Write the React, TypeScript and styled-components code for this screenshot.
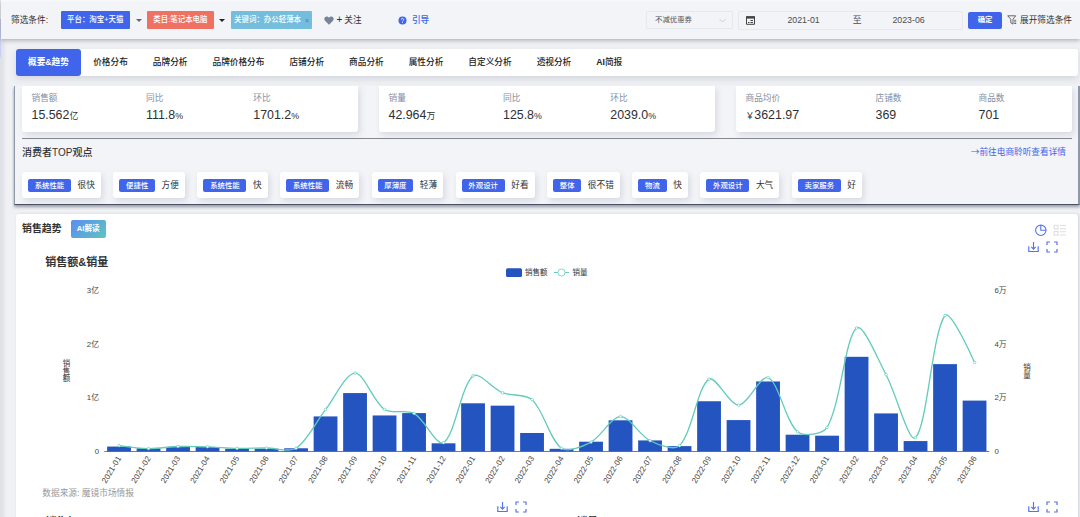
import React from 'react';
import styled, { createGlobalStyle, css } from 'styled-components';

const GlobalStyle = createGlobalStyle`
  * { box-sizing: border-box; }
  html, body { margin: 0; padding: 0; }
  body {
    width: 1080px;
    height: 517px;
    overflow: hidden;
    background: #f0f1f4;
    font-family: "Liberation Sans", "Noto Sans CJK SC", sans-serif;
    color: #303133;
    font-size: 8.67px;
    line-height: 1;
  }
`;

const Page = styled.div`
  height: 517px;
  display: flex;
  overflow: hidden;
`;

const SideEdge = styled.div`
  width: 1px;
  flex: none;
  background: linear-gradient(#eceef2 0 19px, #c9cff5 19px 57px, #dfe1e7 57px);
`;

const Main = styled.div`
  flex: 1;
  min-width: 0;
  height: 517px;
  background: linear-gradient(90deg, #dcdfe5 0, #f0f1f4 6px);
`;

const Header = styled.header`
  height: 39px;
  display: flex;
  align-items: center;
  padding: 1px 0 0 10px;
  background: linear-gradient(#f8f9fa 0, #f3f4f7 3px);
  box-shadow: 0 1px 5px rgba(0, 0, 0, 0.32);
  white-space: nowrap;
`;

const FilterLabel = styled.span`
  width: 49.5px;
`;

const FilterTag = styled.span<{ $bg: string; $w: number }>`
  width: ${p => p.$w}px;
  height: 18px;
  display: flex;
  align-items: center;
  justify-content: center;
  gap: 4px;
  background: ${p => p.$bg};
  border-radius: 1px;
  color: #fff;
  font-size: 7.45px;
  font-weight: 500;
`;

const TagClose = styled.i`
  font-style: normal;
  font-size: 7px;
  color: #3f78d8;
`;

const Caret = styled.i<{ $color: string }>`
  margin: 0 5.6px;
  border: 3px solid transparent;
  border-top: 3.5px solid ${p => p.$color};
  border-bottom: 0;
`;

const Follow = styled.span`
  margin-left: 12px;
  width: 73.5px;
  display: flex;
  align-items: center;
  gap: 2px;
`;

const Plus = styled.span`
  font-size: 10px;
`;

const Guide = styled.span`
  flex: 1;
  display: flex;
  align-items: center;
  gap: 5px;
  color: #4065eb;
  font-weight: 500;
`;

const Select = styled.div`
  width: 87px;
  height: 18px;
  display: flex;
  align-items: center;
  justify-content: space-between;
  padding: 0 6px 0 8px;
  border: 1px solid #e6e8ec;
  border-radius: 2px;
  font-size: 7.4px;
  color: #505256;
`;

const DateRange = styled.div`
  width: 225px;
  height: 19px;
  margin: 0 5px;
  display: flex;
  align-items: center;
  padding-left: 7px;
  border: 1px solid #e6e8ec;
  border-radius: 2px;
  color: #4b4d50;
  font-size: 8.8px;
`;

const DateText = styled.span<{ $w: number }>`
  width: ${p => p.$w}px;
  text-align: center;
`;

const Confirm = styled.button`
  width: 34px;
  height: 17px;
  padding: 0 0 1px;
  border: 0;
  border-radius: 2px;
  background: #4065eb;
  color: #fff;
  font: 700 7.4px/16px "Liberation Sans", "Noto Sans CJK SC", sans-serif;
`;

const Expand = styled.span`
  margin: 0 8px 0 5px;
  display: flex;
  align-items: center;
  gap: 3px;
`;

const Content = styled.main`
  padding: 10px 0 0 13px;
`;

const Tabs = styled.nav`
  margin: 0 2px 0 2px;
  height: 27px;
  display: flex;
  background: #fff;
  border-radius: 3px;
  box-shadow: 0 3px 7px rgba(70, 80, 120, 0.16);
`;

const Tab = styled.a<{ $active?: boolean }>`
  height: 27px;
  padding: 0 12.5px;
  display: flex;
  align-items: center;
  font-weight: 500;
  color: #222;
  white-space: nowrap;
  ${p =>
    p.$active &&
    css`
      background: #4065eb;
      color: #fff;
      font-weight: 700;
      border-radius: 3px;
      width: 64.7px;
      padding: 0 12px;
    `}
`;

const Latin = styled.span`
  font-weight: 700;
`;

const Summary = styled.section`
  margin-top: 10px;
  height: 119px;
  padding: 0 6px 0 7px;
  border: solid #8f98a8;
  border-width: 0 2px 1px 1.5px;
  border-bottom-color: #4a5162;
  background: #f3f4f7;
  box-shadow: 0 2px 3px rgba(60, 70, 90, 0.5);
  clip-path: inset(0 -2px -6px -2px);
`;

const Cards = styled.div`
  display: flex;
  gap: 21px;
`;

const Card = styled.div`
  width: 336px;
  height: 46px;
  padding: 7px 0 0 9.5px;
  display: flex;
  background: #fff;
  border-radius: 0 0 3px 3px;
  box-shadow: 2px 3px 6px rgba(80, 90, 130, 0.17);
`;

const Metric = styled.div<{ $w: number }>`
  width: ${p => p.$w}px;
`;

const MetricLabel = styled.div`
  height: 10px;
  line-height: 10px;
  color: #8590a3;
`;

const MetricValue = styled.div`
  margin-top: 3px;
  line-height: 18px;
  font-size: 12.4px;
  color: #2d2f33;
  small { font-size: 8.8px; }
`;

const Opinion = styled.div`
  margin-top: 6px;
  width: 1050px;
  border-top: 1px solid #85888e;
`;

const OpinionHead = styled.div`
  height: 33px;
  padding: 8px 6px 0 0;
  display: flex;
  justify-content: space-between;
`;

const OpinionLink = styled.a`
  color: #4065eb;
  font-family: "Noto Sans CJK SC", sans-serif;
  line-height: 8px;
`;

const OpinionTitle = styled.span`
  font-size: 10px;
  line-height: 12px;
  font-weight: 500;
`;

const Chips = styled.div`
  display: flex;
  gap: 12.55px;
`;

const Chip = styled.div`
  height: 26px;
  padding: 0 6px;
  display: flex;
  align-items: center;
  gap: 6.6px;
  background: #fff;
  border-radius: 3px;
  box-shadow: 2px 3px 6px rgba(80, 90, 130, 0.17);
  white-space: nowrap;
`;

const ChipTag = styled.span`
  height: 13px;
  margin-top: 1px;
  padding: 0 6.7px;
  display: flex;
  align-items: center;
  border-radius: 2px;
  background: #4065eb;
  color: #fff;
  font-size: 7.4px;
  font-weight: 500;
`;

const Panel = styled.section`
  margin: 9px 2px 0 2px;
  height: 320px;
  background: #fff;
  border-radius: 3px;
  box-shadow: 1px 0 3px rgba(80, 90, 130, 0.2);
`;

const PanelHead = styled.div`
  height: 27px;
  padding: 6px 12.5px 0 6px;
  display: flex;
  align-items: flex-start;
`;

const PanelTitle = styled.h2`
  margin: 0;
  width: 48.7px;
  font-size: 9.9px;
  line-height: 17px;
  font-weight: 700;
  white-space: nowrap;
`;

const AiButton = styled.span`
  width: 35px;
  height: 17.5px;
  line-height: 17.5px;
  text-align: center;
  border-radius: 2px;
  background: linear-gradient(135deg, #5b8cf2, #5cc5bf);
  color: #fff;
  font-size: 7.6px;
  font-weight: 700;
`;

const ViewSwitch = styled.div`
  margin: 4px 0 0 auto;
  display: flex;
  gap: 6px;
`;

const Tools = styled.div`
  height: 13px;
  padding-right: 20.5px;
  display: flex;
  justify-content: flex-end;
  gap: 7px;
`;

const ChartSvg = styled.svg`
  display: block;
  width: 1062px;
  height: 247px;
  font-family: "Liberation Sans", "Noto Sans CJK SC", sans-serif;
`;

const NextCharts = styled.div`
  display: flex;
`;

const NextChart = styled.div`
  width: 531px;
`;

const NextTitle = styled.div`
  padding: 1px 0 0 29.5px;
  font-size: 10.8px;
  font-weight: 700;
  line-height: 14px;
`;

const tabs = ['价格分布', '品牌分析', '品牌价格分布', '店铺分析', '商品分析', '属性分析', '自定义分析', '透视分析'];

const cards = [
  [
    { label: '销售额', value: '15.562', unit: '亿', w: 114.5 },
    { label: '同比', value: '111.8', unit: '%', w: 107.3 },
    { label: '环比', value: '1701.2', unit: '%', w: 90 },
  ],
  [
    { label: '销量', value: '42.964', unit: '万', w: 114.5 },
    { label: '同比', value: '125.8', unit: '%', w: 107.3 },
    { label: '环比', value: '2039.0', unit: '%', w: 90 },
  ],
  [
    { label: '商品均价', prefix: '￥', value: '3621.97', w: 130 },
    { label: '店铺数', value: '369', w: 103 },
    { label: '商品数', value: '701', w: 80 },
  ],
] as { label: string; prefix?: string; value: string; unit?: string; w: number }[][];

const chips = [
  ['系统性能', '很快'], ['便捷性', '方便'], ['系统性能', '快'], ['系统性能', '流畅'], ['厚薄度', '轻薄'],
  ['外观设计', '好看'], ['整体', '很不错'], ['物流', '快'], ['外观设计', '大气'], ['卖家服务', '好'],
];

const months = Array.from({ length: 30 }, (_, i) => `${2021 + Math.floor(i / 12)}-${String((i % 12) + 1).padStart(2, '0')}`);

/* Sales in 亿 and volume in 万, one entry per month. */
const sales = [
  0.092, 0.06, 0.082, 0.082, 0.052, 0.052, 0.06, 0.652, 1.086, 0.67, 0.714, 0.152, 0.896, 0.852, 0.344,
  0.05, 0.182, 0.58, 0.206, 0.1, 0.934, 0.584, 1.302, 0.312, 0.294, 1.76, 0.708, 0.194, 1.624, 0.946,
];
const volume = [
  0.22, 0.11, 0.185, 0.175, 0.115, 0.13, 0.12, 1.56, 2.916, 1.56, 1.416, 0.33, 2.81, 2.184, 1.928,
  0.12, 0.35, 1.3, 0.4, 0.22, 2.69, 1.725, 2.75, 0.735, 0.895, 4.588, 2.855, 0.516, 5.056, 3.31,
];

const X0 = 88.3;
const STEP = 29.5;
const BASE = 197.5;
const UNIT = 53.8;
const SMOOTH = 0.31;
const centre = (i: number) => X0 + STEP * (i + 0.5);
const points = volume.map((v, i) => [centre(i), BASE - (v / 2) * UNIT] as const);

function smoothPath(pts: readonly (readonly [number, number])[]) {
  let d = `M${pts[0][0]} ${pts[0][1]}`;
  let out = pts[0] as readonly [number, number];
  for (let i = 1; i < pts.length; i++) {
    const [x, y] = pts[i];
    const prev = pts[i - 1];
    const next = pts[i + 1];
    let cin: [number, number] = [x, y];
    let nextOut: readonly [number, number] = [x, y];
    if (next) {
      const vx = next[0] - prev[0];
      const vy = next[1] - prev[1];
      const lp = Math.hypot(x - prev[0], y - prev[1]);
      const ln = Math.hypot(next[0] - x, next[1] - y);
      const r = ln / (lp + ln);
      cin = [x - vx * SMOOTH * (1 - r), y - vy * SMOOTH * (1 - r)];
      nextOut = [x + vx * SMOOTH * r, y + vy * SMOOTH * r];
    }
    d += `C${out[0]} ${out[1]} ${cin[0]} ${cin[1]} ${x} ${y}`;
    out = nextOut;
  }
  return d;
}

const DownloadIcon = () => (
  <svg width="11" height="12" viewBox="0 0 11 12" fill="none" stroke="#5474ee" strokeWidth="1.15">
    <path d="M.8 5.2v5.3h9.4V5.2M5.5 1v7M3.3 5.9l2.2 2.2 2.2-2.2" />
  </svg>
);

const FullscreenIcon = () => (
  <svg width="12" height="12" viewBox="0 0 12 12" fill="none" stroke="#5474ee" strokeWidth="1.2">
    <path d="M1 4V1h3M8 1h3v3M11 8v3H8M4 11H1V8" />
  </svg>
);

function TrendChart() {
  return (
    <ChartSvg viewBox="0 0 1062 247">
      <text x="29.3" y="11.5" fontSize="11" fontWeight="700" fill="#303133">销售额&amp;销量</text>
      <rect x="490" y="14.2" width="16" height="8.8" rx="1.5" fill="#2454c0" />
      <text x="509" y="21.3" fontSize="7.5" fill="#333">销售额</text>
      <path d="M538 18.5h15" stroke="#66cdbf" />
      <circle cx="545.5" cy="18.5" r="3.6" fill="#fff" stroke="#66cdbf" strokeWidth="0.8" />
      <text x="556.5" y="21.3" fontSize="7.5" fill="#333">销量</text>
      {[3, 2, 1, 0].map(n => (
        <g key={n} fontSize="7.8" fill="#444">
          <text x="83" y={BASE - n * UNIT + 2.7} textAnchor="end">{n ? `${n}亿` : '0'}</text>
          <text x="978.5" y={BASE - n * UNIT + 2.7}>{n ? `${n * 2}万` : '0'}</text>
        </g>
      ))}
      <g fontSize="7.5" fill="#333" textAnchor="middle">
        {[...'销售额'].map((c, i) => <text key={c} x="50.5" y={112.3 + i * 7.5}>{c}</text>)}
        {[...'销量'].map((c, i) => <text key={c} x="1011" y={116 + i * 7.5}>{c}</text>)}
      </g>
      {sales.map((v, i) => (
        <rect key={i} x={centre(i) - 11.9} y={BASE - v * UNIT} width="23.8" height={v * UNIT} fill="#2454c0" />
      ))}
      <path d={`M${X0} ${BASE}H${X0 + STEP * 30}`} stroke="#555c6b" strokeWidth="0.8" />
      <path d={smoothPath(points)} fill="none" stroke="#62cbbb" strokeWidth="1.3" />
      {points.map(([x, y], i) => (
        <circle key={i} cx={x} cy={y} r="1.3" fill="#fff" stroke="#66cdbf" strokeWidth="0.7" />
      ))}
      {months.map((m, i) => (
        <text
          key={m}
          transform={`translate(${centre(i) + 2.4} 204.3) rotate(-59)`}
          textAnchor="end"
          fontSize="8"
          textLength="29.8"
          fill="#444"
        >
          {m}
        </text>
      ))}
      <text x="26.3" y="242.4" fontSize="8.7" fill="#999">数据来源: 魔镜市场情报</text>
    </ChartSvg>
  );
}

export default function App() {
  return (
    <Page>
      <GlobalStyle />
      <SideEdge />
      <Main>
        <Header>
          <FilterLabel>筛选条件:</FilterLabel>
          <FilterTag $bg="#4065eb" $w={69.5}>平台：淘宝+天猫</FilterTag>
          <Caret $color="#666" />
          <FilterTag $bg="#ee7161" $w={66.5}>类目:笔记本电脑</FilterTag>
          <Caret $color="#222" />
          <FilterTag $bg="#74bddc" $w={81.5}>关键词：办公轻薄本<TagClose>×</TagClose></FilterTag>
          <Follow>
            <svg width="10" height="9" viewBox="0 0 10 9" fill="#76849a">
              <path d="M5 8.7 1 4.7C-.6 2.7.8.4 2.7.4 3.8.4 4.6 1 5 1.7 5.4 1 6.2.4 7.3.4 9.2.4 10.6 2.7 9 4.7z" />
            </svg>
            <Plus>+</Plus>
            <span>关注</span>
          </Follow>
          <Guide>
            <svg width="9" height="9" viewBox="0 0 9 9">
              <circle cx="4.5" cy="4.5" r="4" fill="#4065eb" />
              <path d="M3.3 3.6a1.2 1.2 0 1 1 1.7 1.1q-.5.2-.5.8M4.5 6.2v.8" fill="none" stroke="#fff" strokeWidth=".8" />
            </svg>
            引导
          </Guide>
          <Select>
            不减优惠券
            <svg width="7" height="5" viewBox="0 0 7 5" fill="none" stroke="#c0c4cc" strokeWidth=".8"><path d="M.5 1l3 3 3-3" /></svg>
          </Select>
          <DateRange>
            <svg width="9" height="9" viewBox="0 0 9 9">
              <path d="M.5.8h8v7.5h-8z" fill="none" stroke="#444" />
              <path d="M0 .3h9v2.3H0z" fill="#444" />
              <path d="M2 6.5h1.5M4.5 6.5H7M4.5 4.5H7" stroke="#444" />
            </svg>
            <DateText $w={97}>2021-01</DateText>
            <DateText $w={10}>至</DateText>
            <DateText $w={93}>2023-06</DateText>
          </DateRange>
          <Confirm>确定</Confirm>
          <Expand>
            <svg width="10" height="10" viewBox="0 0 10 10" fill="none" stroke="#444" strokeWidth=".8">
              <path d="M.7.8h8L6 4.2v4.9L3.8 7.8V4.2zM7.2 5.3h2M7.2 6.9h2M7.2 8.5h2" />
            </svg>
            展开筛选条件
          </Expand>
        </Header>
        <Content>
          <Tabs>
            <Tab $active>概要&amp;趋势</Tab>
            {tabs.map(t => <Tab key={t}>{t}</Tab>)}
            <Tab><Latin>AI</Latin>简报</Tab>
          </Tabs>
          <Summary>
            <Cards>
              {cards.map((metrics, i) => (
                <Card key={i}>
                  {metrics.map(m => (
                    <Metric key={m.label} $w={m.w}>
                      <MetricLabel>{m.label}</MetricLabel>
                      <MetricValue>
                        {m.prefix && <small>{m.prefix}</small>}
                        {m.value}
                        {m.unit && <small>{m.unit}</small>}
                      </MetricValue>
                    </Metric>
                  ))}
                </Card>
              ))}
            </Cards>
            <Opinion>
              <OpinionHead>
                <OpinionTitle>消费者TOP观点</OpinionTitle>
                <OpinionLink>→前往电商聆听查看详情</OpinionLink>
              </OpinionHead>
              <Chips>
                {chips.map(([tag, text], i) => (
                  <Chip key={i}><ChipTag>{tag}</ChipTag>{text}</Chip>
                ))}
              </Chips>
            </Opinion>
          </Summary>
          <Panel>
            <PanelHead>
              <PanelTitle>销售趋势</PanelTitle>
              <AiButton>AI解读</AiButton>
              <ViewSwitch>
                <svg width="13" height="13" viewBox="0 0 13 13" fill="none" stroke="#5474ee" strokeWidth="1.1">
                  <circle cx="6.8" cy="6.3" r="5.2" /><path d="M6.8 1.1v5.2H12" />
                </svg>
                <svg width="13" height="13" viewBox="0 0 13 13" fill="none" stroke="#dedee1" strokeWidth="1.1">
                  <path d="M1.2 1.2h3.8v3.8H1.2zM1.2 7.5h3.8v3.8H1.2zM7 1.5h6M7 4.7h6M7 7.8h6M7 11h6" />
                </svg>
              </ViewSwitch>
            </PanelHead>
            <Tools><DownloadIcon /><FullscreenIcon /></Tools>
            <TrendChart />
            <NextCharts>
              <NextChart>
                <Tools><DownloadIcon /><FullscreenIcon /></Tools>
                <NextTitle>销售额</NextTitle>
              </NextChart>
              <NextChart>
                <Tools><DownloadIcon /><FullscreenIcon /></Tools>
                <NextTitle>销量</NextTitle>
              </NextChart>
            </NextCharts>
          </Panel>
        </Content>
      </Main>
    </Page>
  );
}
